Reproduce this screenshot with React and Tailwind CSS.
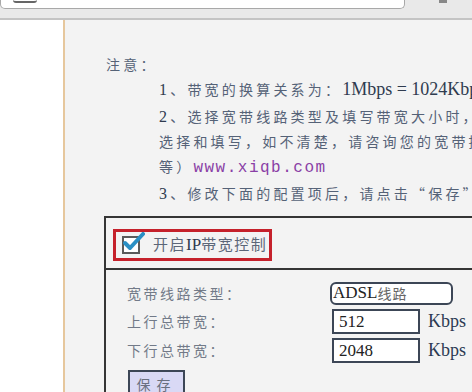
export default function App() {
  const cjk = { fontFamily: '"Noto Sans CJK SC", "Noto Sans", sans-serif' };
  const serif = { fontFamily: '"Liberation Serif", "Noto Sans CJK SC", serif' };
  const num = (n) => (
    <span className="text-[16px] text-[#2f3b4f]" style={serif}>{n}</span>
  );

  return (
    <div className="w-[472px] h-[392px] overflow-hidden bg-white flex flex-col">
      {/* browser chrome */}
      <div className="h-[20px] shrink-0 bg-[#e9e9e9] border-b-2 border-[#c4c4c4] flex items-start">
        <div className="w-[405px] h-[9px] bg-white border border-t-0 border-[#a8a8a8] rounded-b-[5px] relative">
          <div className="absolute left-[12px] top-0 w-[24px] h-[3px] border-b-2 border-[#666] rounded-b-full" />
        </div>
        <div className="ml-[34px] w-[8px] h-[3px] bg-[#888]" />
      </div>

      <div className="flex flex-1">
        <div className="w-[63px] shrink-0 bg-white" />
        <div className="flex-1 min-w-0 overflow-hidden bg-[#f3f3f3] border-l-2 border-[#e6c79d] pt-[32px] pl-[41px] text-[#556277]" style={cjk}>
          <div className="text-[14px] tracking-[3.2px] whitespace-nowrap">
            <div className="leading-[24px]">注意：</div>
            <div className="pl-[53px] leading-[25px]">
              <div className="mt-[1px]">
                {num(1)}、带宽的换算关系为：<span className="text-[18px] tracking-normal text-[#2f3b4f]" style={serif}>1Mbps = 1024Kbps</span>
              </div>
              <div className="mt-[2px]">{num(2)}、选择宽带线路类型及填写带宽大小时，请根据实际情况进行</div>
              <div>选择和填写，如不清楚，请咨询您的宽带提供商（如电信，网通</div>
              <div>
                等）<span className="text-[16px] tracking-[1.5px] text-[#8a3fa6]" style={{ fontFamily: '"Liberation Mono", monospace' }}>www.xiqb.com</span>
              </div>
              <div>{num(3)}、修改下面的配置项后，请点击“保存”按钮，使设置生效。</div>
            </div>
          </div>

          <div className="mt-[10px] -ml-[2px] w-[420px] border-2 border-[#353535]">
            <div className="h-[52px] pt-[11px] pl-[7px] border-b-2 border-[#353535]">
              <div className="w-[159px] h-[32px] border-[3px] border-[#c5212b] flex items-center pl-[6px]">
                <div className="relative w-[18px] h-[18px] border-2 border-[#5a5a5a] bg-white shrink-0">
                  <svg className="absolute -left-[1px] -top-[6px]" width="22" height="20" viewBox="0 0 22 20">
                    <path d="M2 11 L7 16 L20 2" fill="none" stroke="#2a8fc4" strokeWidth="4" strokeLinecap="round" strokeLinejoin="round" />
                  </svg>
                </div>
                <span className="ml-[13px] text-[15px] tracking-[1.5px] text-[#5b6678]">
                  开启<span className="text-[17px] text-[#2f3b4f] tracking-normal" style={serif}>IP</span>带宽控制
                </span>
              </div>
            </div>

            <div className="pl-[21px] pt-[11px] pb-[20px] text-[14px] tracking-[2.5px] text-[#727a88]">
              <div className="flex items-center h-[24px]">
                <div className="w-[203px]">宽带线路类型：</div>
                <div className="w-[123px] h-[23px] border-2 border-[#3c4656] rounded-[6px] bg-white flex items-center pl-[1px] text-[17px] tracking-normal text-[#222]" style={serif}>
                  ADSL<span className="text-[14px] text-[#666] tracking-[1px]" style={cjk}>线路</span>
                </div>
              </div>
              <div className="flex items-center h-[25px] mt-[4px]">
                <div className="w-[205px]">上行总带宽：</div>
                <div className="w-[88px] h-[25px] border-2 border-[#3c4656] bg-white flex items-center pl-[5px] text-[17px] tracking-normal text-[#222]" style={serif}>512</div>
                <div className="ml-[8px] text-[18px] tracking-normal text-[#2c3a52]" style={serif}>Kbps</div>
              </div>
              <div className="flex items-center h-[25px] mt-[4px]">
                <div className="w-[205px]">下行总带宽：</div>
                <div className="w-[88px] h-[25px] border-2 border-[#3c4656] bg-white flex items-center pl-[5px] text-[17px] tracking-normal text-[#222]" style={serif}>2048</div>
                <div className="ml-[8px] text-[18px] tracking-normal text-[#2c3a52]" style={serif}>Kbps</div>
              </div>
              <div className="mt-[7px] ml-[1px] w-[57px] h-[28px] border-2 border-[#3c4656] bg-[#d9d9f5] flex items-center justify-center text-[14px] tracking-[6px] text-[#6a7080]">
                保存
              </div>
            </div>
          </div>
        </div>
      </div>
    </div>
  );
}
